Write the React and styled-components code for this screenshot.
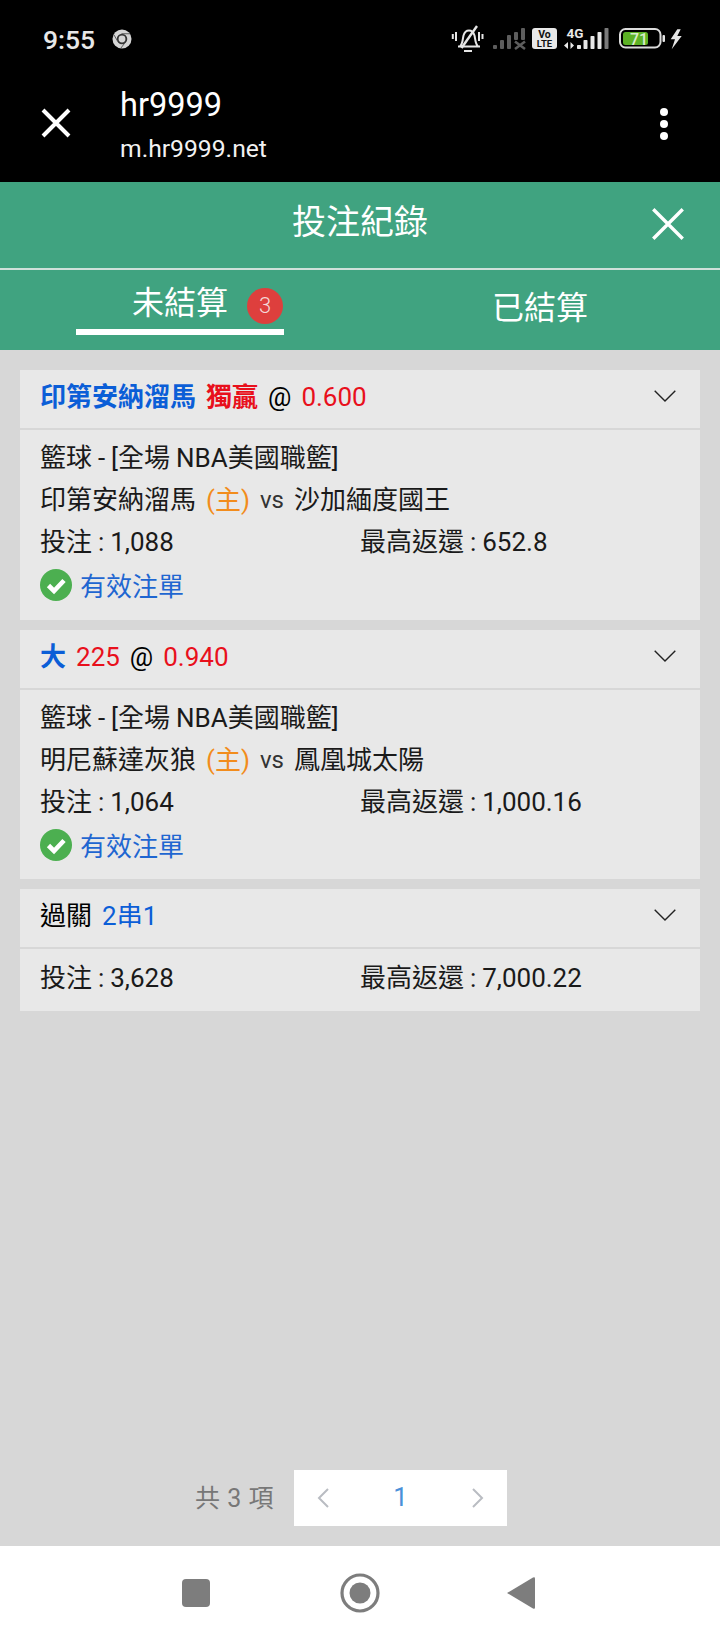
import React from "react";
import styled, { createGlobalStyle } from "styled-components";

const Global = createGlobalStyle`
  html, body { margin: 0; padding: 0; background: #d7d7d7; }
  * { box-sizing: border-box; }
  body { font-family: Roboto, "Noto Sans CJK TC", "Noto Sans CJK SC", sans-serif; }
`;

const Page = styled.div`
  width: 720px; height: 1640px; display: flex; flex-direction: column; overflow: hidden;
`;
const Chrome = styled.header`
  height: 182px; background: #000; color: #fff; display: flex; flex-direction: column;
`;
const StatusBar = styled.div`
  height: 78px; padding: 0 34px 0 43px; display: flex; align-items: center; justify-content: space-between;
`;
const StatusLeft = styled.div`display: flex; align-items: center; gap: 17px;`;
const Clock = styled.span`font-size: 26.5px; font-weight: 500; color: #e8e8e8;`;
const StatusRight = styled.div`display: flex; align-items: center;`;
const TinyText = styled.text`font-family: Roboto, sans-serif; font-weight: 700;`;
const BrowserBar = styled.div`
  flex: 1; display: flex; align-items: flex-start; padding: 0 52px 0 41px;
`;
const CloseWrap = styled.div`margin-top: 30px; width: 30px; height: 30px;`;
const Titles = styled.div`margin-left: 49px; flex: 1; display: flex; flex-direction: column;`;
const SiteName = styled.div`font-size: 32.5px; line-height: 44px; margin-top: 5px;`;
const SiteUrl = styled.div`font-size: 24.7px; line-height: 32px; margin-top: 6px; color: #f2f2f2;`;
const Dots = styled.div`margin-top: 30px; display: flex; flex-direction: column; gap: 4px;`;
const Dot = styled.i`display: block; width: 8px; height: 8px; border-radius: 50%; background: #fff;`;

const GreenHead = styled.div`
  height: 88px; background: #40a380; color: #fff; display: flex; align-items: center; justify-content: center;
  position: relative; border-bottom: 2px solid #cfe0da; padding-bottom: 12px;
  font-size: 34px;
`;
const HeadClose = styled.div`position: absolute; right: 35px; top: 25px; width: 34px; height: 34px;`;
const Tabs = styled.div`
  height: 80px; background: #40a380; color: #fff; display: grid; grid-template-columns: 360px 360px;
`;
const Tab = styled.div`
  display: flex; align-items: flex-start; justify-content: center; font-size: 32px; line-height: 44px;
  padding-top: ${p => p.$top}px; position: relative;
`;
const ActiveTab = styled(Tab)`justify-content: flex-start; padding-left: 132px;`;
const Underline = styled.i`position: absolute; left: 76px; width: 208px; height: 6px; background: #fff; top: 59px;`;
const Badge = styled.span`
  width: 36px; height: 36px; border-radius: 50%; background: #de3f3d; color: #f4d9d8; font-size: 22px; font-weight: 300;
  display: flex; align-items: center; justify-content: center; margin-left: 19px; margin-top: 7px;
`;

const Content = styled.main`
  flex: 1; background: #d7d7d7; padding: 20px 20px 20px; display: flex; flex-direction: column;
`;
const List = styled.div`flex: 1; display: flex; flex-direction: column; gap: 10px;`;
const Card = styled.section`display: flex; flex-direction: column; gap: 2px;`;
const CardHead = styled.div`
  height: 58px; background: #e8e8e8; padding: 0 24px 0 20px; display: flex; align-items: center; justify-content: space-between;
  font-size: 26px;
`;
const HeadText = styled.div`display: flex; align-items: baseline; gap: 10px; white-space: pre; padding-bottom: 9px;`;
const Blue = styled.span`color: #0b5ed7; font-weight: ${p => p.$bold ? 700 : 400};`;
const Red = styled.span`color: #e8101c; font-weight: ${p => p.$bold ? 700 : 400};`;
const ChevronWrap = styled.span`display: flex; margin-bottom: 7px;`;
const CardBody = styled.div`
  background: #e8e8e8; padding: ${p => p.$compact ? "8px" : "7px"} 20px 0; height: ${p => p.$h}px; font-size: 26px; color: #1a1a1a;
  word-spacing: -0.5px;
`;
const Line = styled.div`height: 42px; line-height: 42px; white-space: pre;`;
const MatchRow = styled(Line)`display: flex; align-items: center; gap: 10px;`;
const Orange = styled.span`color: #f28c1c;`;
const Vs = styled.span`font-size: 24px; color: #333;`;
const Col = styled.span`width: 320px; display: inline-block;`;
const Status = styled.div`height: 44px; display: flex; align-items: center; gap: 8px; color: #1f66d1;`;
const StatusLabel = styled.span`padding-bottom: 2px;`;

const Pager = styled.div`
  height: 56px; display: flex; align-items: center; justify-content: flex-start; padding-left: 175px; flex: none;
`;
const Total = styled.span`font-size: 25px; color: #777; letter-spacing: 1px; width: 99px; padding-bottom: 5px; word-spacing: -1px;`;
const PagerBox = styled.div`
  width: 213px; height: 56px; background: #fff; display: flex; align-items: center; justify-content: space-between; padding: 0 23px;
`;
const PageNum = styled.span`font-size: 26px; color: #4a90d9; padding-bottom: 2px;`;

const NavBar = styled.nav`
  height: 94px; background: #fff; display: grid; grid-template-columns: 182px 28px 130px 40px 126px 29px; align-items: center;
`;
const Cell = styled.div`grid-column: ${p => p.$c}; display: flex; justify-content: center;`;
const Square = styled.i`display: block; width: 28px; height: 28px; border-radius: 4px; background: #7d7d7d;`;

const Cross = ({ w = 3.5 }) => (
  <svg width="100%" height="100%" viewBox="0 0 30 30"><path d="M2 2 28 28M28 2 2 28" stroke="#fff" strokeWidth={w} fill="none" /></svg>
);
const Chevron = () => (
  <ChevronWrap>
    <svg width="22" height="12" viewBox="0 0 22 12"><path d="M.7 .7 11 11 21.3 .7" stroke="#222" strokeWidth="1.4" fill="none" /></svg>
  </ChevronWrap>
);
const Check = () => (
  <svg width="32" height="32" viewBox="0 0 32 32">
    <circle cx="16" cy="16" r="16" fill="#4caf50" />
    <path d="M8.5 16.5 14 22 24 11.5" stroke="#fff" strokeWidth="4.6" fill="none" />
  </svg>
);
const PagerArrow = ({ d }) => (
  <svg width="13" height="20" viewBox="0 0 13 20"><path d={d} stroke="#b9bcc2" strokeWidth="2" fill="none" /></svg>
);

const StatusIcons = () => (
  <svg width="236" height="32" viewBox="450 23 236 32">
    {/* muted bell */}
    <g fill="none" stroke="#e6e6e6" strokeWidth="2">
      <path d="M458 46.500h22M460 46.500c3-3 2.500-7 3.500-11 1-3.500 3-5 5.500-5s4.500 1.500 5.500 5c1 4 .5 8 3.500 11" />
      <path d="M461.500 48 477 26" strokeWidth="2.400" />
      <path d="M464 51h8" strokeWidth="2" />
      <path d="M456 32v9M452.800 34v5M479 32v9M482.500 34v5" />
    </g>
    {/* first signal, no service */}
    <g fill="#5d5d5d">
      <rect x="493" y="45" width="4" height="4" rx="1" />
      <rect x="500" y="40" width="4" height="9" rx="1" />
      <rect x="507" y="35" width="4" height="14" rx="1" />
      <rect x="514" y="32" width="4" height="8" rx="1" />
      <rect x="521" y="28" width="4" height="12" rx="1" />
      <path d="M515 41.500 525 49M525 41.500 515 49" stroke="#5d5d5d" strokeWidth="2.600" />
    </g>
    {/* VoLTE */}
    <rect x="532" y="28" width="25" height="21" rx="3" fill="#e8e8e8" />
    <TinyText x="544.500" y="37.500" textAnchor="middle" fontSize="10.500" fill="#111">Vo</TinyText>
    <TinyText x="544.500" y="47" textAnchor="middle" fontSize="9.500" fill="#111">LTE</TinyText>
    {/* 4G + signal */}
    <TinyText x="566.500" y="37.500" fontSize="13.500" fill="#e8e8e8">4G</TinyText>
    <g fill="#e8e8e8">
      <path d="M568 42v7l-4-3.500zM570.500 42v7l3.500-3.500z" />
      <rect x="577" y="45" width="4" height="4" rx=".8" />
      <rect x="583.500" y="40" width="4" height="9" rx=".8" />
      <rect x="590.500" y="36" width="4" height="13" rx=".8" />
      <rect x="597.500" y="32" width="4" height="17" rx=".8" />
    </g>
    <rect x="604.500" y="28" width="4" height="21" rx=".8" fill="#7a7a7a" />
    {/* battery */}
    <rect x="620" y="29" width="40.500" height="18.500" rx="5.500" fill="none" stroke="#dcdcdc" strokeWidth="2" />
    <rect x="623" y="32" width="25" height="13" rx="2.500" fill="#5cb125" />
    <rect x="662.500" y="35" width="2.500" height="7" rx="1" fill="#e4e4e4" />
    <TinyText x="639" y="44.500" textAnchor="middle" fontSize="16" fill="#d8eccb" style={{ fontWeight: 500 }}>71</TinyText>
    <path d="M677.300 29.300 670.700 39.300H675L671.700 49.300 681.700 36H677.300L680.700 29.300z" fill="#e6e6e6" />
  </svg>
);

const ChromeIcon = () => (
  <svg width="20" height="20" viewBox="0 0 21 21">
    <circle cx="10.500" cy="10.500" r="10" fill="#d5d5d5" />
    <circle cx="10.500" cy="10.500" r="5.500" fill="#333" />
    <circle cx="10.500" cy="10.500" r="3.600" fill="#d5d5d5" />
    <path d="M10 5h9M6 13 2 6M14 14l-5 6.500" stroke="#555" strokeWidth="1" />
  </svg>
);

const BetCard = ({ head, home, away, stake, ret, h }) => (
  <Card>
    <CardHead><HeadText>{head}</HeadText><Chevron /></CardHead>
    <CardBody $h={h}>
      <Line>籃球 - [全場 NBA美國職籃]</Line>
      <MatchRow><span>{home}</span><Orange>(主)</Orange><Vs>vs</Vs><span>{away}</span></MatchRow>
      <Line><Col>投注 : {stake}</Col>最高返還 : {ret}</Line>
      <Status><Check /><StatusLabel>有效注單</StatusLabel></Status>
    </CardBody>
  </Card>
);

export default function App() {
  return (
    <Page>
      <Global />
      <Chrome>
        <StatusBar>
          <StatusLeft><Clock>9:55</Clock><ChromeIcon /></StatusLeft>
          <StatusRight><StatusIcons /></StatusRight>
        </StatusBar>
        <BrowserBar>
          <CloseWrap><Cross w={4} /></CloseWrap>
          <Titles>
            <SiteName>hr9999</SiteName>
            <SiteUrl>m.hr9999.net</SiteUrl>
          </Titles>
          <Dots><Dot /><Dot /><Dot /></Dots>
        </BrowserBar>
      </Chrome>
      <GreenHead>
        投注紀錄
        <HeadClose><Cross w={3} /></HeadClose>
      </GreenHead>
      <Tabs>
        <ActiveTab $top={11}>未結算<Badge>3</Badge><Underline /></ActiveTab>
        <Tab $top={16}>已結算</Tab>
      </Tabs>
      <Content>
        <List>
          <BetCard
            h={190}
            head={<><Blue $bold>印第安納溜馬</Blue><Red $bold>獨贏</Red><span>@</span><Red>0.600</Red></>}
            home="印第安納溜馬"
            away="沙加緬度國王"
            stake="1,088"
            ret="652.8"
          />
          <BetCard
            h={189}
            head={<><Blue $bold>大</Blue><Red>225</Red><span>@</span><Red>0.940</Red></>}
            home="明尼蘇達灰狼"
            away="鳳凰城太陽"
            stake="1,064"
            ret="1,000.16"
          />
          <Card>
            <CardHead><HeadText><span>過關</span><Blue>2串1</Blue></HeadText><Chevron /></CardHead>
            <CardBody $h={62} $compact>
              <Line><Col>投注 : 3,628</Col>最高返還 : 7,000.22</Line>
            </CardBody>
          </Card>
        </List>
        <Pager>
          <Total>共 3 項</Total>
          <PagerBox>
            <PagerArrow d="M11 1 2 10l9 9" />
            <PageNum>1</PageNum>
            <PagerArrow d="M2 1l9 9-9 9" />
          </PagerBox>
        </Pager>
      </Content>
      <NavBar>
        <Cell $c={2}><Square /></Cell>
        <Cell $c={4}>
          <svg width="40" height="40" viewBox="0 0 40 40">
            <circle cx="20" cy="20" r="18" fill="none" stroke="#7d7d7d" strokeWidth="3.200" />
            <circle cx="20" cy="20" r="10.500" fill="#7d7d7d" />
          </svg>
        </Cell>
        <Cell $c={6}>
          <svg width="29" height="34" viewBox="0 0 29 34"><path d="M1 17 27 1.500q2-1 2 1v29q0 2-2 1z" fill="#7d7d7d" /></svg>
        </Cell>
      </NavBar>
    </Page>
  );
}
